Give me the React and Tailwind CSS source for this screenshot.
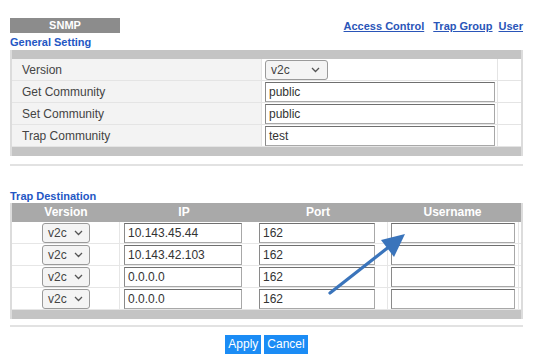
import React from "react";

const Chevron = () => (
  <svg width="9" height="6" viewBox="0 0 9 6" className="shrink-0">
    <path d="M1 1 L4.5 4.5 L8 1" fill="none" stroke="#555" strokeWidth="1.3" />
  </svg>
);

const Select = ({ w, px }) => (
  <div
    className={`h-[20px] ${w} flex items-center justify-between ${px} rounded-[3px] border border-[#9a9a9a] bg-[#f4f4f4] text-[12px] text-[#444]`}
  >
    <span>v2c</span>
    <Chevron />
  </div>
);

const Input = ({ w, value }) => (
  <div
    className={`h-[20px] ${w} flex items-center pl-[3px] border border-[#a8a8a8] border-t-[#6f6f6f] border-l-[#8a8a8a] bg-white text-[12px] text-[#333]`}
  >
    {value}
  </div>
);

const GenRow = ({ label, children }) => (
  <div className="grid grid-cols-[250px_235px_1fr] h-[22px] border-b border-[#e4e4e4]">
    <div className="bg-[#f3f3f3] flex items-center pl-[10px] text-[12px] text-[#444] border-r border-[#e4e4e4]">
      {label}
    </div>
    <div className="flex items-center pl-[3px]">{children}</div>
    <div className="border-l border-[#e4e4e4]"></div>
  </div>
);

const TrapRow = ({ ip, port }) => (
  <div className="grid grid-cols-[108px_132px_136px_1fr] h-[22px] border-b border-[#e6e6e6]">
    <div className="flex items-center pl-[30px] border-r border-[#e6e6e6]">
      <Select w="w-[48px]" px="pl-[5px] pr-[6px]" />
    </div>
    <div className="flex items-center pl-[4px]">
      <Input w="w-[118px]" value={ip} />
    </div>
    <div className="flex items-center pl-[7px] border-r border-[#e6e6e6]">
      <Input w="w-[116px]" value={port} />
    </div>
    <div className="flex items-center pl-[3px] border-r border-[#e6e6e6] mr-[2px]">
      <Input w="w-[124px]" value="" />
    </div>
  </div>
);

export default function App() {
  return (
    <div
      className="relative w-[558px] h-[360px] bg-white overflow-hidden"
      style={{ fontFamily: '"Liberation Sans", Arial, sans-serif' }}
    >
      <div className="pl-[10px] pr-[35px] pt-[18px]">
        <div className="flex justify-between items-start">
          <div className="w-[110px] h-[15px] bg-[#8c8c8c] text-white font-bold text-[11px] leading-[15px] text-center">
            SNMP
          </div>
          <div className="flex text-[11px] font-bold text-[#2a55b8] underline mt-[1px] leading-[14px]">
            <span>Access Control</span>
            <span className="ml-[9px]">Trap Group</span>
            <span className="ml-[6px]">User</span>
          </div>
        </div>
        <div className="text-[11px] font-bold text-[#2457c4] leading-[12px] mt-[3px] mb-[2px]">
          General Setting
        </div>
        <div className="border-x-2 border-[#dcdcdc]">
          <div className="h-[9px] bg-[#c4c4c4]"></div>
          <GenRow label="Version">
            <Select w="w-[63px]" px="pl-[5px] pr-[7px]" />
          </GenRow>
          <GenRow label="Get Community">
            <Input w="w-[230px]" value="public" />
          </GenRow>
          <GenRow label="Set Community">
            <Input w="w-[230px]" value="public" />
          </GenRow>
          <GenRow label="Trap Community">
            <Input w="w-[230px]" value="test" />
          </GenRow>
          <div className="h-[9px] bg-[#c4c4c4]"></div>
        </div>
        <div className="h-[2px] bg-[#e2e2e2] mt-[8px]"></div>

        <div className="text-[11px] font-bold text-[#2457c4] leading-[14px] mt-[23px]">
          Trap Destination
        </div>
        <div className="border-x-2 border-[#dcdcdc]">
          <div className="grid grid-cols-[108px_132px_136px_1fr] h-[19px] bg-[#a9a9a9] text-white font-bold text-[12px] leading-[19px] text-center">
            <div>Version</div>
            <div className="pr-[4px]">IP</div>
            <div className="pr-[4px]">Port</div>
            <div className="pr-[4px]">Username</div>
          </div>
          <TrapRow ip="10.143.45.44" port="162" />
          <TrapRow ip="10.143.42.103" port="162" />
          <TrapRow ip="0.0.0.0" port="162" />
          <TrapRow ip="0.0.0.0" port="162" />
          <div className="h-[9px] bg-[#c4c4c4]"></div>
        </div>
        <div className="h-[2px] bg-[#e2e2e2] mt-[6px]"></div>

        <div className="flex justify-center gap-[3px] mt-[8px]">
          <div className="h-[19px] px-[3px] bg-[#1b8cf5] text-white text-[12px] leading-[19px]">Apply</div>
          <div className="h-[19px] px-[3px] bg-[#1b8cf5] text-white text-[12px] leading-[19px]">Cancel</div>
        </div>
      </div>

      <svg className="absolute left-0 top-0" width="558" height="360" viewBox="0 0 558 360">
        <line x1="330" y1="293" x2="390" y2="246" stroke="#3a74bb" strokeWidth="3.2" strokeLinecap="round" />
        <polygon points="405,234 381,240 394,257" fill="#3a74bb" />
      </svg>
    </div>
  );
}
